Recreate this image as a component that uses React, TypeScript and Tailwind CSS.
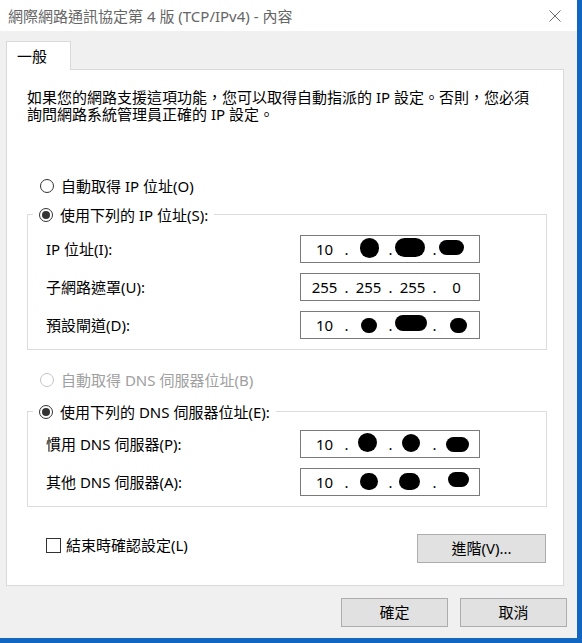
import React from "react";

const font = "font-['Noto_Sans','Noto_Sans_CJK_TC',sans-serif]";

type Blob = { x: number; y: number; w: number; h: number };

const Radio = ({ checked, disabled }: { checked?: boolean; disabled?: boolean }) => (
  <span
    className={
      "flex h-[14px] w-[14px] shrink-0 items-center justify-center rounded-full border bg-white " +
      (disabled ? "border-[#c4c4c4]" : "border-[#333333]")
    }
  >
    {checked && <span className="h-[8px] w-[8px] rounded-full bg-[#333333]" />}
  </span>
);

const IpField = ({ parts, blobs = [] }: { parts: string[]; blobs?: Blob[] }) => (
  <div className="relative flex h-[28px] w-[180px] items-center border border-[#7a7a7a] bg-white pl-[5px] text-[15px] text-black">
    {parts.map((p, i) => (
      <React.Fragment key={i}>
        {i > 0 && <span className="w-[7px] text-center">.</span>}
        <span className="w-[37px] text-center">{p}</span>
      </React.Fragment>
    ))}
    {blobs.map((b, i) => (
      <span
        key={i}
        className="absolute rounded-full bg-black"
        style={{ left: b.x, top: b.y, width: b.w, height: b.h }}
      />
    ))}
  </div>
);

const FieldRow = ({ label, children }: { label: string; children: React.ReactNode }) => (
  <div className="flex h-[28px] items-center">
    <span className="w-[272px] shrink-0 pl-[18px]">{label}</span>
    {children}
  </div>
);

const Button = ({ label, w }: { label: string; w: string }) => (
  <div className={"flex h-[29px] items-center justify-center border border-[#adadad] bg-[#e1e1e1] " + w}>
    {label}
  </div>
);

export default function App() {
  return (
    <div className={"flex h-[643px] w-[582px] bg-[#1166c2] text-[15px] text-black " + font}>
      <div className="flex h-[638px] w-[577px] flex-col bg-[#f0f0f0]">
        {/* title bar */}
        <div className="flex h-[31px] shrink-0 items-center justify-between bg-white pl-[8px] pr-[16px]">
          <span className="leading-[20px] text-[#666666]">網際網路通訊協定第 4 版 (TCP/IPv4) - 內容</span>
          <svg width="12" height="12" viewBox="0 0 12 12">
            <path d="M0.5 0.5 L11.5 11.5 M11.5 0.5 L0.5 11.5" stroke="#6b6b6b" strokeWidth="1" />
          </svg>
        </div>

        <div className="flex flex-col pl-[6px] pr-[13px] pt-[10px]">
          {/* tab */}
          <div className="relative z-10 -mb-px flex h-[29px] w-[65px] items-center border border-b-0 border-[#d9d9d9] bg-white pl-[10px]">
            一般
          </div>

          {/* panel */}
          <div className="flex h-[517px] w-[558px] flex-col border border-[#d9d9d9] bg-white pl-[20px] pr-[16px] pt-[19px]">
            <p className="leading-[17px]">
              如果您的網路支援這項功能，您可以取得自動指派的 IP 設定。否則，您必須
              <br />
              詢問網路系統管理員正確的 IP 設定。
            </p>

            <div className="mt-[53px] flex h-[20px] items-center gap-[7px] pl-[13px]">
              <Radio />
              <span>自動取得 IP 位址(O)</span>
            </div>

            <div className="mt-[18px] border border-[#dcdcdc] pb-[10px]">
              <div className="-mt-[10px] ml-[5px] flex h-[20px] w-fit items-center gap-[7px] bg-white px-[6px]">
                <Radio checked />
                <span>使用下列的 IP 位址(S):</span>
              </div>
              <div className="mt-[10px] flex flex-col gap-[10px]">
                <FieldRow label="IP 位址(I):">
                  <IpField
                    parts={["10", "", "", ""]}
                    blobs={[
                      { x: 59, y: 2, w: 19, h: 20 },
                      { x: 94, y: 2, w: 30, h: 19 },
                      { x: 138, y: 4, w: 25, h: 15 },
                    ]}
                  />
                </FieldRow>
                <FieldRow label="子網路遮罩(U):">
                  <IpField parts={["255", "255", "255", "0"]} />
                </FieldRow>
                <FieldRow label="預設閘道(D):">
                  <IpField
                    parts={["10", "", "", ""]}
                    blobs={[
                      { x: 60, y: 6, w: 16, h: 15 },
                      { x: 94, y: 3, w: 32, h: 16 },
                      { x: 149, y: 6, w: 17, h: 15 },
                    ]}
                  />
                </FieldRow>
              </div>
            </div>

            <div className="mt-[20px] flex h-[20px] items-center gap-[7px] pl-[13px] text-[#a0a0a0]">
              <Radio disabled />
              <span>自動取得 DNS 伺服器位址(B)</span>
            </div>

            <div className="mt-[21px] border border-[#dcdcdc] pb-[10px]">
              <div className="-mt-[10px] ml-[5px] flex h-[20px] w-fit items-center gap-[7px] bg-white px-[6px]">
                <Radio checked />
                <span>使用下列的 DNS 伺服器位址(E):</span>
              </div>
              <div className="mt-[8px] flex flex-col gap-[10px]">
                <FieldRow label="慣用 DNS 伺服器(P):">
                  <IpField
                    parts={["10", "", "", ""]}
                    blobs={[
                      { x: 57, y: 2, w: 19, h: 19 },
                      { x: 101, y: 3, w: 18, h: 18 },
                      { x: 145, y: 6, w: 23, h: 15 },
                    ]}
                  />
                </FieldRow>
                <FieldRow label="其他 DNS 伺服器(A):">
                  <IpField
                    parts={["10", "", "", ""]}
                    blobs={[
                      { x: 59, y: 4, w: 18, h: 17 },
                      { x: 98, y: 4, w: 21, h: 17 },
                      { x: 147, y: 3, w: 21, h: 15 },
                    ]}
                  />
                </FieldRow>
              </div>
            </div>

            <div className="mt-[27px] flex items-start justify-between">
              <div className="mt-[1px] flex h-[20px] items-center gap-[5px] pl-[19px]">
                <span className="h-[15px] w-[15px] border border-[#333333] bg-white" />
                <span>結束時確認設定(L)</span>
              </div>
              <div className="mr-px">
                <Button label="進階(V)..." w="w-[129px]" />
              </div>
            </div>
          </div>
        </div>

        <div className="mt-[12px] flex justify-end gap-[12px] pr-[10px]">
          <Button label="確定" w="w-[107px]" />
          <Button label="取消" w="w-[107px]" />
        </div>
      </div>
    </div>
  );
}
